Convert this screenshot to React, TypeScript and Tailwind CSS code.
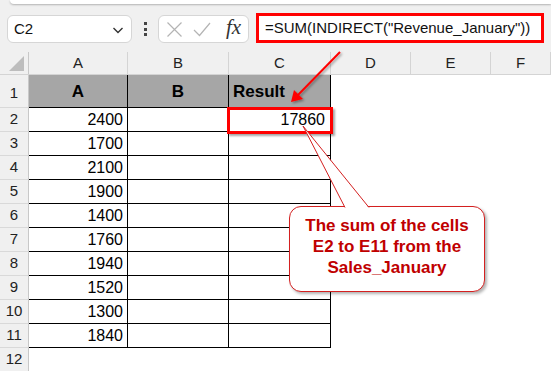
import React from "react";

const data = [2400, 1700, 2100, 1900, 1400, 1760, 1940, 1520, 1300, 1840];
const cols = ["D", "E", "F"];

function RowHead({ n, h, bottom }: { n: number; h: string; bottom?: boolean }) {
  return (
    <div
      className={`w-[29px] shrink-0 flex justify-center border-r border-b border-r-[#c8c8c8] border-b-[#d9d9d9] bg-[#f0f0f0] text-[15px] text-[#222] ${h} ${
        bottom ? "items-end pb-[3px]" : "items-center"
      }`}
    >
      {n}
    </div>
  );
}

export default function App() {
  return (
    <div
      className="relative w-[551px] h-[371px] overflow-hidden bg-white"
      style={{ fontFamily: '"Liberation Sans", Arial, sans-serif' }}
    >
      {/* toolbar */}
      <div className="h-[52px] bg-[#f0f0f0] flex flex-col">
        <div className="h-[4px] ml-[10px] bg-white rounded-bl-[6px] shadow-[0_1px_2px_rgba(0,0,0,0.25)]" />
        <div className="flex items-center mt-[9px] h-[30px]">
          <div className="ml-[7px] mt-[2px] w-[125px] h-[28px] bg-white border border-[#d6d6d6] rounded-[6px] flex items-center justify-between pl-[6px] pr-[6px] text-[15px] text-[#111]">
            <span>C2</span>
            <svg width="14" height="14" viewBox="0 0 14 14" className="mt-[2px]">
              <path d="M2.5 5l4.5 4.5L11.5 5" fill="none" stroke="#333" strokeWidth="1.4" />
            </svg>
          </div>
          <div className="w-[26px] flex flex-col items-center gap-[2.5px] mt-[2px]">
            <div className="w-[3px] h-[3px] bg-[#444]" />
            <div className="w-[3px] h-[3px] bg-[#444]" />
            <div className="w-[3px] h-[3px] bg-[#444]" />
          </div>
          <div className="mt-[2px] w-[91px] h-[28px] bg-white border border-[#d6d6d6] rounded-[6px] flex items-center pl-[7px]">
            <svg width="17" height="17" viewBox="0 0 17 17">
              <path d="M1.5 1.5l14 14M15.5 1.5l-14 14" stroke="#b4b4b4" strokeWidth="1.2" fill="none" />
            </svg>
            <svg width="18" height="17" viewBox="0 0 18 17" className="ml-[10px]">
              <path d="M1 9l5.5 5.5L17 2" stroke="#b4b4b4" strokeWidth="1.2" fill="none" />
            </svg>
            <span
              className="ml-[15px] italic text-[21px] leading-none text-[#333] mt-[-3px]"
              style={{ fontFamily: '"Liberation Serif", "Times New Roman", serif' }}
            >
              fx
            </span>
          </div>
          <div className="ml-[7px] w-[288px] h-[30px] border-[3px] border-[#ff0000] bg-white flex items-center pl-[6px] text-[15px] text-[#111]">
            =SUM(INDIRECT("Revenue_January"))
          </div>
        </div>
      </div>

      {/* column header */}
      <div className="flex h-[23px] bg-[#f0f0f0] border-b border-[#d4d4d4]">
        <div className="w-[29px] shrink-0 border-r border-[#c8c8c8] flex items-end justify-end pr-[4px] pb-[3px]">
          <svg width="15" height="15" viewBox="0 0 15 15">
            <path d="M15 0L15 15L0 15Z" fill="#bdbdbd" />
          </svg>
        </div>
        {[
          ["A", "w-[99px]"],
          ["B", "w-[101px]"],
          ["C", "w-[102px]"],
          ["D", "w-[80px]"],
          ["E", "w-[80px]"],
          ["F", "w-[60px]"],
        ].map(([l, w]) => (
          <div
            key={l}
            className={`${w} shrink-0 border-r border-[#d4d4d4] flex items-center justify-center text-[15px] text-[#222]`}
          >
            {l}
          </div>
        ))}
      </div>

      {/* row 1 */}
      <div className="flex h-[33px]">
        <RowHead n={1} h="h-[33px]" bottom />
        <div className="w-[99px] shrink-0 bg-[#a6a6a6] border-r border-b border-black flex items-center justify-center font-bold text-[17px] text-black pt-[2px]">
          A
        </div>
        <div className="w-[101px] shrink-0 bg-[#a6a6a6] border-r border-b border-black flex items-center justify-center font-bold text-[17px] text-black pt-[2px]">
          B
        </div>
        <div className="w-[102px] shrink-0 bg-[#a6a6a6] border-r border-b border-black flex items-center pl-[4px] font-bold text-[17px] text-black pt-[2px]">
          Result
        </div>
      </div>

      {/* data rows */}
      {data.map((v, i) => (
        <div key={i} className="flex h-[24px]">
          <RowHead n={i + 2} h="h-[24px]" />
          <div className="w-[99px] shrink-0 border-r border-b border-black flex items-center justify-end pr-[4px] text-[16px] text-black">
            {v}
          </div>
          <div className="w-[101px] shrink-0 border-r border-b border-black" />
          <div className="w-[102px] shrink-0 border-r border-b border-black flex items-center justify-end pr-[5px] text-[16px] text-black">
            {i === 0 ? "17860" : ""}
          </div>
        </div>
      ))}

      {/* row 12 */}
      <div className="flex h-[23px]">
        <div className="w-[29px] shrink-0 h-[23px] flex items-center justify-center border-r border-[#c8c8c8] bg-[#f0f0f0] text-[15px] text-[#222]">
          12
        </div>
      </div>

      {/* C2 highlight */}
      <div className="absolute left-[227px] top-[107px] w-[106px] h-[27px] border-[3px] border-[#ff0000] shadow-[2px_2px_2px_rgba(0,0,0,0.35)]" />

      {/* callout */}
      <div className="absolute left-[289px] top-[206px] w-[196px] h-[86px] rounded-[12px] border-[1.5px] border-[#d42020] bg-white shadow-[2px_2px_3px_rgba(0,0,0,0.3)] pt-[8px] text-center font-bold text-[17px] leading-[21px] text-[#c00000]">
        <div>The sum of the cells</div>
        <div>E2 to E11 from the</div>
        <div>Sales_January</div>
      </div>

      <svg className="absolute left-0 top-0 pointer-events-none" width="551" height="371" viewBox="0 0 551 371">
        <defs>
          <filter id="sh" x="-20%" y="-20%" width="140%" height="140%">
            <feDropShadow dx="1.5" dy="1.5" stdDeviation="1" floodColor="#000" floodOpacity="0.35" />
          </filter>
        </defs>
        {/* callout pointer */}
        <polygon points="345,208 303,126 369,208" fill="white" />
        <polyline points="345,207.5 303,126 369,207.5" fill="none" stroke="#d42020" strokeWidth="1" />
        {/* arrow */}
        <g filter="url(#sh)">
          <line x1="340" y1="52" x2="297" y2="96" stroke="#ff0000" strokeWidth="2" />
          <polygon points="291,102 294,90 303,99" fill="#ff0000" />
        </g>
      </svg>
    </div>
  );
}
